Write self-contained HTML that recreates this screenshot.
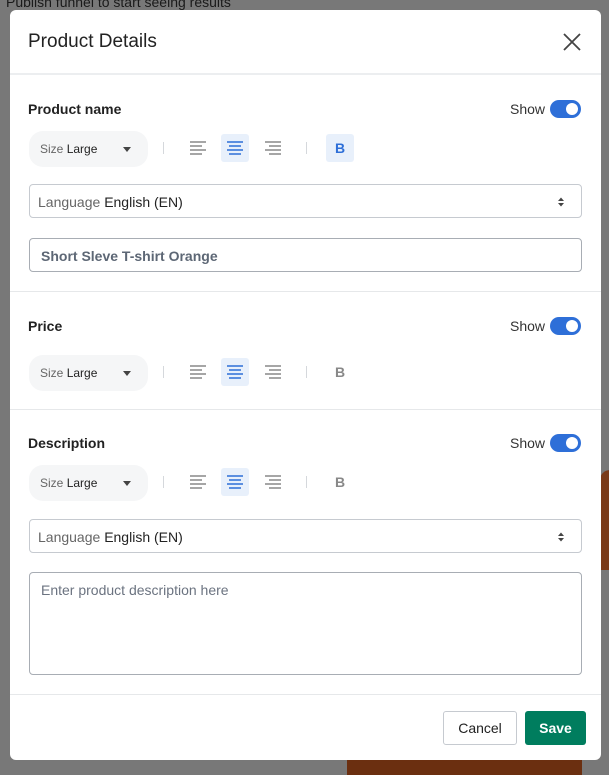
<!DOCTYPE html>
<html><head><style>
*{box-sizing:border-box;margin:0;padding:0}
body{width:609px;height:768px;background:#787878;font-family:"Liberation Sans",sans-serif;position:relative;overflow:hidden}
.top{position:absolute;left:6px;top:-6px;color:#1a1a1a;font-size:14px}
.orange{position:absolute;left:347px;top:755px;width:235px;height:20px;background:#6b2f10}
.orange2{position:absolute;left:600px;top:470px;width:20px;height:100px;background:#7a3a18;border-radius:10px 0 0 0}
.modal{position:absolute;left:10px;top:10px;width:591px;height:750px;background:#fff;border-radius:6px}
.hdr{height:65px;border-bottom:2px solid #eceef0;position:relative}
.hdr h1{position:absolute;left:18px;top:21px;font-size:19px;font-weight:normal;color:#222}
.x{position:absolute;right:20px;top:23px}
.a{position:absolute}
.lbl{font-size:14px;font-weight:bold;color:#222}
.show{font-size:14px;color:#333}
.tog{width:31px;height:18px;border-radius:9px;background:#2e6fd8}
.tog::after{content:"";position:absolute;right:3px;top:3px;width:12px;height:12px;border-radius:50%;background:#fff}
.pill{width:119px;height:36px;border-radius:14px;background:#f5f6f7;font-size:12px;color:#666;padding:11px 0 0 11px}
.pill b{color:#222;font-weight:normal}
.tri{position:absolute;right:17px;top:16px;border-left:4px solid transparent;border-right:4px solid transparent;border-top:5px solid #444}
.sep{width:1px;height:12px;background:#d5d8dc}
.btn{width:28px;height:28px;border-radius:3px}
.sel{background:#e8f0fb}
.B{font-weight:bold;font-size:14px;text-align:center;line-height:28px}
.box{border:1px solid #c6cad0;border-radius:4px;left:19px;width:553px}
.div{left:0;width:591px;height:1px;background:#e6e8ea}
</style></head><body>
<div class="top">Publish funnel to start seeing results</div>
<div class="orange"></div><div class="orange2"></div>
<div class="modal">
<div class="hdr"><h1>Product Details</h1>
<svg class="x" width="18" height="18" viewBox="0 0 18 18"><path d="M1 1L17 17M17 1L1 17" stroke="#444" stroke-width="1.8"/></svg></div>

<div class="a lbl" style="left:18px;top:91px">Product name</div>
<div class="a show" style="left:500px;top:91px">Show</div>
<div class="a tog" style="left:540px;top:90px"></div>

<div class="a lbl" style="left:18px;top:308px">Price</div>
<div class="a show" style="left:500px;top:308px">Show</div>
<div class="a tog" style="left:540px;top:307px"></div>

<div class="a lbl" style="left:18px;top:425px">Description</div>
<div class="a show" style="left:500px;top:425px">Show</div>
<div class="a tog" style="left:540px;top:424px"></div>

<div class="a pill" style="left:19px;top:121px">Size <b>Large</b><span class="tri"></span></div>
<div class="a pill" style="left:19px;top:345px">Size <b>Large</b><span class="tri"></span></div>
<div class="a pill" style="left:19px;top:455px">Size <b>Large</b><span class="tri"></span></div>

<div class="a sep" style="left:153px;top:132px"></div><div class="a sep" style="left:296px;top:132px"></div>
<div class="a sep" style="left:153px;top:356px"></div><div class="a sep" style="left:296px;top:356px"></div>
<div class="a sep" style="left:153px;top:466px"></div><div class="a sep" style="left:296px;top:466px"></div>

<svg class="a" style="left:178px;top:124px" width="120" height="28"><g stroke="#888" stroke-width="1.4">
<path d="M2 8H18M2 12H14M2 16H18M2 20H14"/></g>
<rect x="33" y="0" width="28" height="28" fill="#e8f0fb" rx="3"/>
<g stroke="#2e6fd8" stroke-width="1.6"><path d="M39 8H55M41 12H53M39 16H55M41 20H53"/></g>
<g stroke="#888" stroke-width="1.4"><path d="M77 8H93M81 12H93M77 16H93M81 20H93"/></g></svg>
<div class="a btn sel B" style="left:316px;top:124px;color:#2e6fd8">B</div>

<svg class="a" style="left:178px;top:348px" width="120" height="28"><g stroke="#888" stroke-width="1.4">
<path d="M2 8H18M2 12H14M2 16H18M2 20H14"/></g>
<rect x="33" y="0" width="28" height="28" fill="#e8f0fb" rx="3"/>
<g stroke="#2e6fd8" stroke-width="1.6"><path d="M39 8H55M41 12H53M39 16H55M41 20H53"/></g>
<g stroke="#888" stroke-width="1.4"><path d="M77 8H93M81 12H93M77 16H93M81 20H93"/></g></svg>
<div class="a btn B" style="left:316px;top:348px;color:#888">B</div>

<svg class="a" style="left:178px;top:458px" width="120" height="28"><g stroke="#888" stroke-width="1.4">
<path d="M2 8H18M2 12H14M2 16H18M2 20H14"/></g>
<rect x="33" y="0" width="28" height="28" fill="#e8f0fb" rx="3"/>
<g stroke="#2e6fd8" stroke-width="1.6"><path d="M39 8H55M41 12H53M39 16H55M41 20H53"/></g>
<g stroke="#888" stroke-width="1.4"><path d="M77 8H93M81 12H93M77 16H93M81 20H93"/></g></svg>
<div class="a btn B" style="left:316px;top:458px;color:#888">B</div>

<div class="a box" style="top:174px;height:34px;font-size:14px;color:#666;padding:9px 0 0 8px">Language <span style="color:#222">English (EN)</span>
<svg style="position:absolute;right:16px;top:11px" width="8" height="12"><path d="M1 5L4 1.5L7 5ZM1 7L4 10.5L7 7Z" fill="#444"/></svg></div>
<div class="a box" style="top:228px;height:34px;font-size:14px;font-weight:bold;color:#5d6775;padding:9px 0 0 11px;border-color:#a8adb4">Short Sleve T-shirt Orange</div>
<div class="a div" style="top:281px"></div>
<div class="a div" style="top:399px"></div>

<div class="a box" style="top:509px;height:34px;font-size:14px;color:#666;padding:9px 0 0 8px">Language <span style="color:#222">English (EN)</span>
<svg style="position:absolute;right:16px;top:11px" width="8" height="12"><path d="M1 5L4 1.5L7 5ZM1 7L4 10.5L7 7Z" fill="#444"/></svg></div>
<div class="a box" style="top:562px;height:103px;font-size:14px;color:#6b7380;padding:9px 0 0 11px;border-color:#a8adb4">Enter product description here</div>
<div class="a div" style="top:684px"></div>

<div class="a" style="left:433px;top:701px;width:74px;height:34px;border:1px solid #c6cad0;border-radius:3px;font-size:14px;color:#222;text-align:center;line-height:32px">Cancel</div>
<div class="a" style="left:515px;top:701px;width:61px;height:34px;background:#007d5e;border-radius:3px;font-size:14px;font-weight:bold;color:#fff;text-align:center;line-height:34px">Save</div>
</div>
</body></html>
